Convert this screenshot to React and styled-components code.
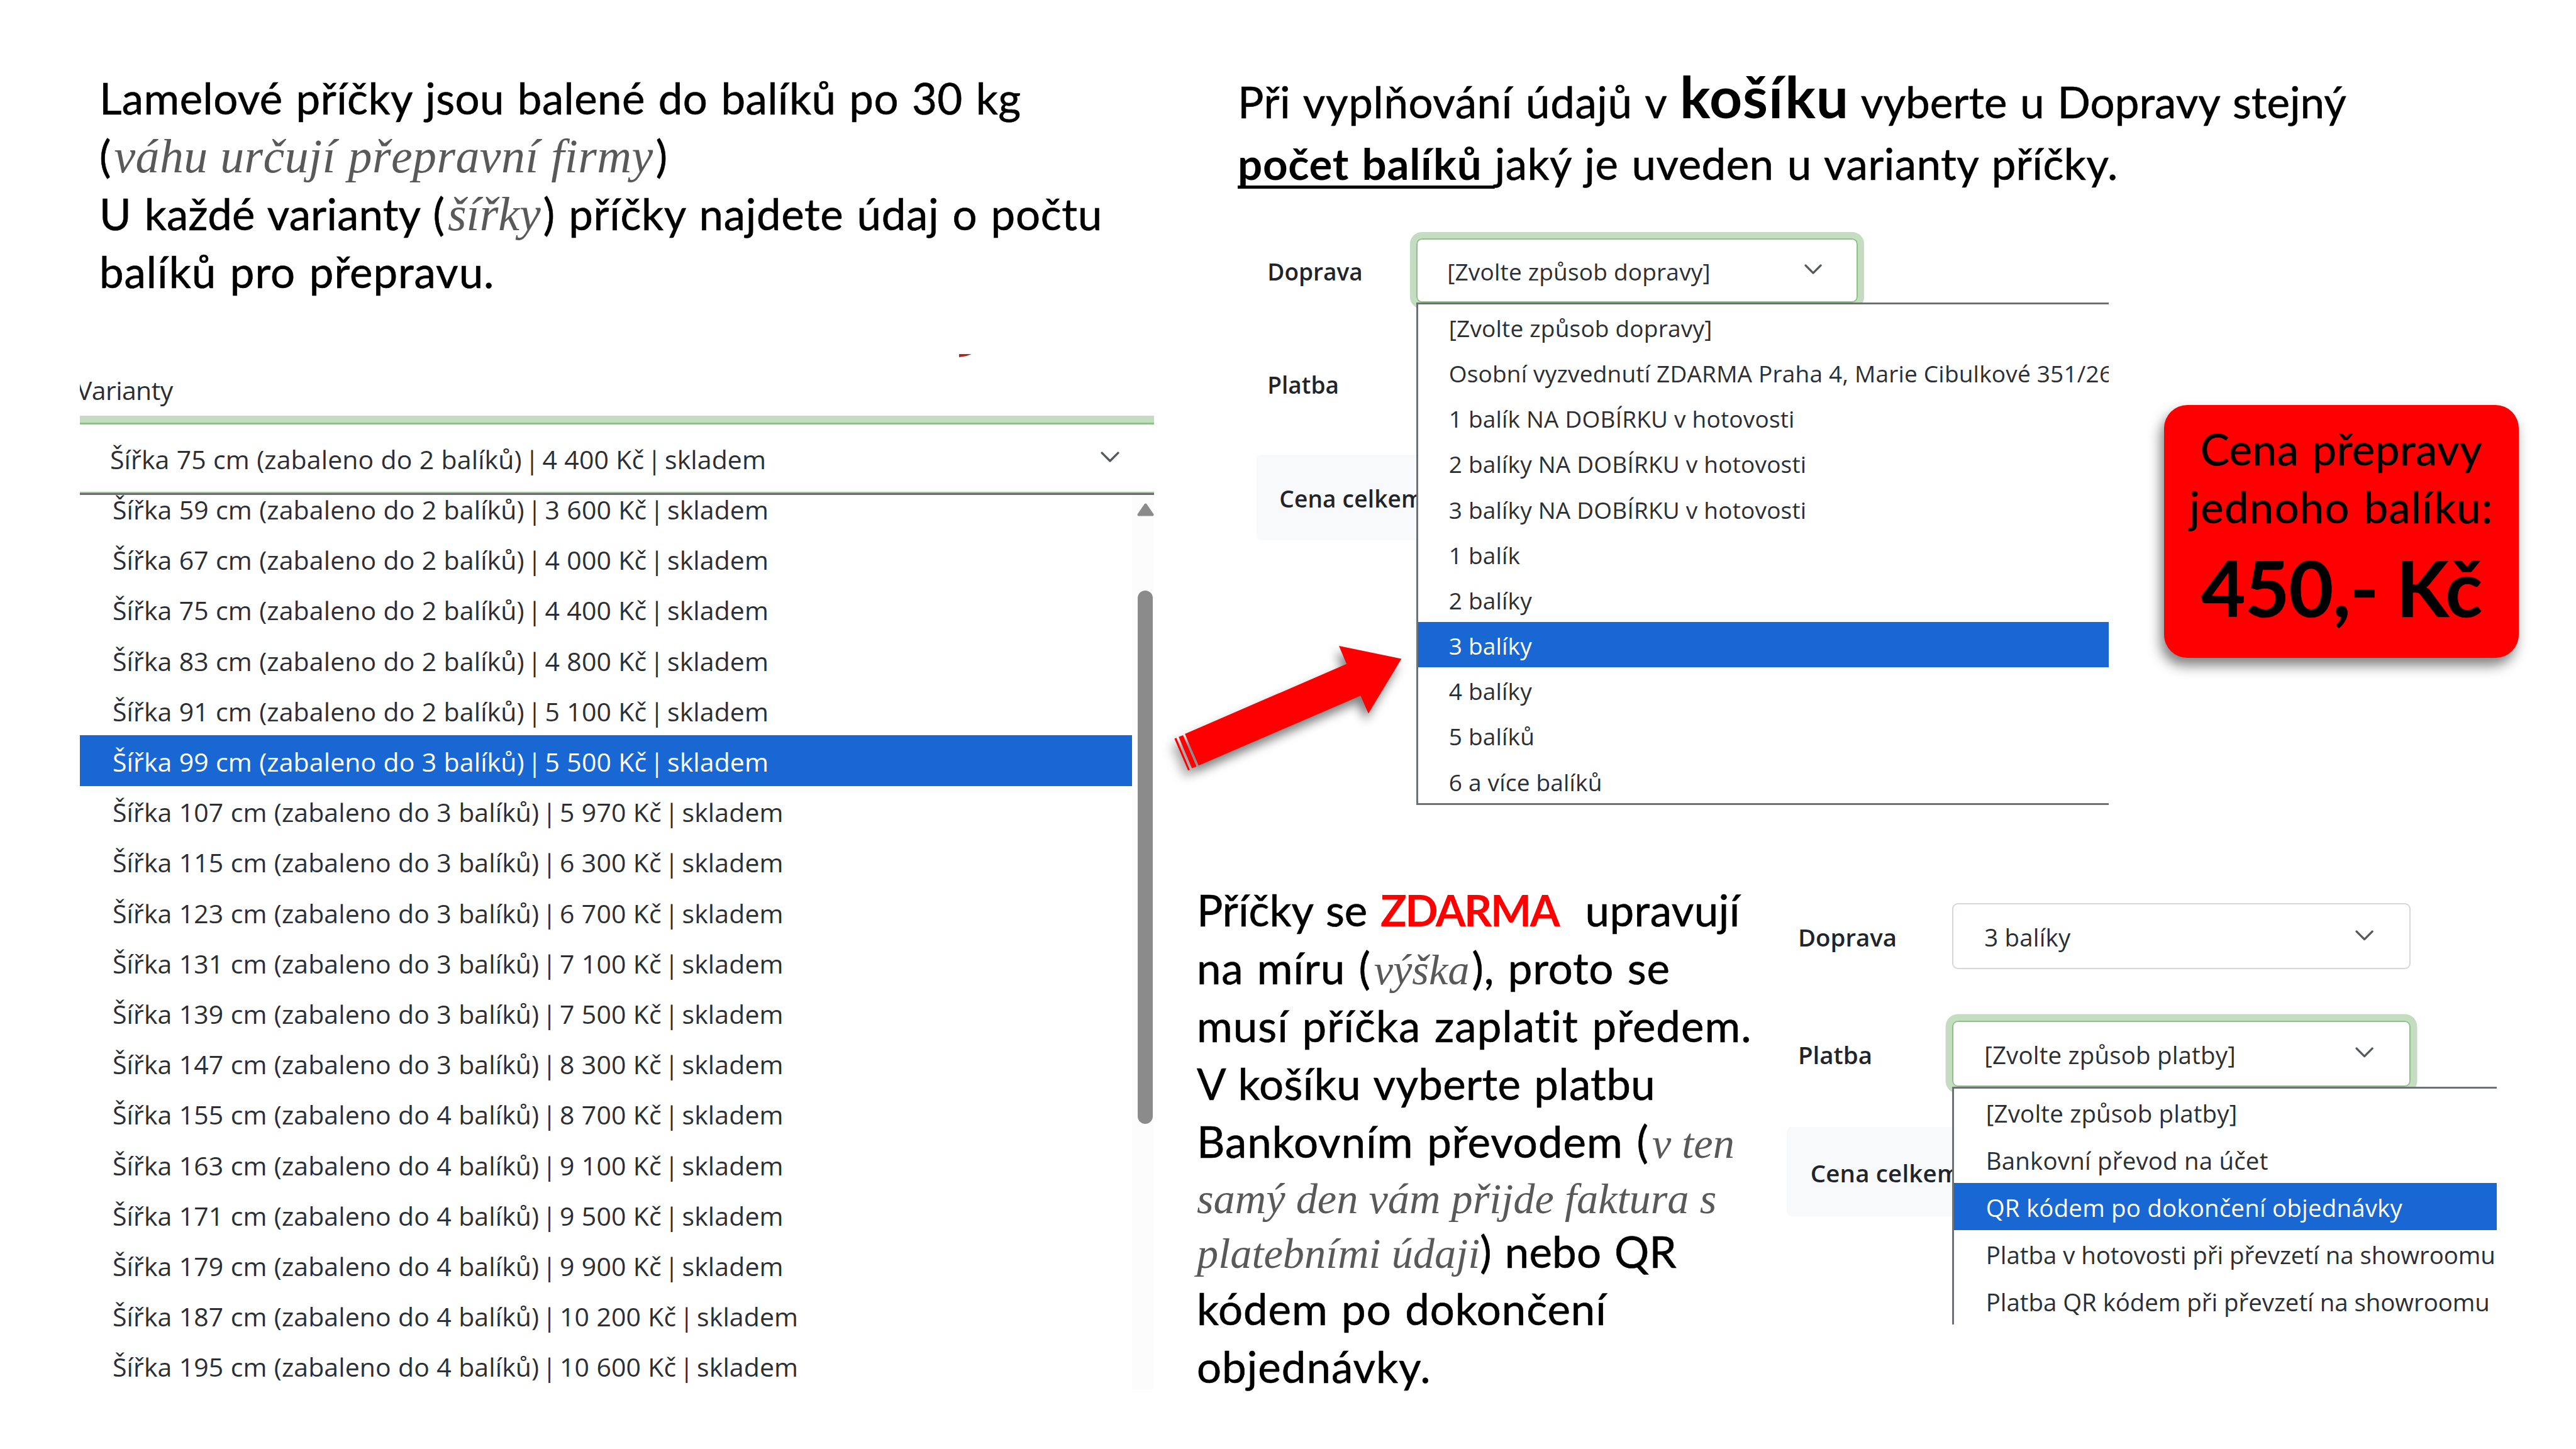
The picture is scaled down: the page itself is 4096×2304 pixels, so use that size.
import React from "react";
import styled, { createGlobalStyle, css } from "styled-components";

const GlobalStyle = createGlobalStyle`
  body {
    margin: 0;
    background: #ffffff;
  }

  *, *::before, *::after {
    box-sizing: border-box;
  }
`;

const textFont = css`
  font-family: Lato, "Open Sans", sans-serif;
  -webkit-text-stroke: 0.6px currentColor;
`;

const uiFont = css`
  font-family: "Open Sans", "Noto Sans", sans-serif;
`;

const Slide = styled.main`
  position: relative;
  display: flex;
  width: 4096px;
  height: 2304px;
  overflow: hidden;
  background: #ffffff;
`;

const LeftColumn = styled.section`
  flex: none;
  width: 1835px;
  padding: 110px 0 0 127px;
`;

const RightColumn = styled.section`
  flex: 1;
  display: flex;
  flex-direction: column;
  padding-top: 113px;
`;

const Paragraph = styled.div`
  ${textFont}
  flex: none;
  width: ${(p) => p.$width || "auto"};
  padding-left: ${(p) => p.$indent}px;
  color: #000000;
  font-size: 69px;
`;

const Line = styled.p`
  margin: 0;
  height: ${(p) => p.$height || 92}px;
  line-height: ${(p) => p.$height || 92}px;
  letter-spacing: ${(p) => p.$tracking || 0}px;
  word-spacing: 3px;
  white-space: pre;
`;

const Run = styled.span`
  letter-spacing: ${(p) => p.$tracking || 0}px;
`;

const Aside = styled.em`
  margin: ${(p) => (p.$spaced ? "0 4px 0 5px" : "0")};
  color: #595959;
  font-family: "Liberation Serif", serif;
  font-size: ${(p) => p.$size}px;
  line-height: 0;
  letter-spacing: ${(p) => p.$tracking || 0}px;
  word-spacing: 0;
  -webkit-text-stroke: 0;
`;

const Strong = styled.strong`
  color: ${(p) => p.$color || "inherit"};
  font-size: ${(p) => p.$size || 69}px;
  font-weight: 700;
  line-height: 0;
  letter-spacing: ${(p) => p.$tracking || 0}px;
  -webkit-text-stroke: 0;
`;

const Underlined = styled(Strong)`
  text-decoration: underline;
  text-decoration-thickness: 5px;
  text-decoration-skip-ink: none;
  text-underline-offset: 9px;
`;

/* Variant picker */

const VariantPanel = styled.div`
  ${uiFont}
  position: relative;
  width: 1708px;
  margin-top: 85px;
  overflow: hidden;
  color: #2b2f33;
  font-size: 41px;
  letter-spacing: 0.11px;
  word-spacing: 0.5px;
  white-space: pre;
`;

const RedMark = styled.svg`
  position: absolute;
  top: 0;
  left: 1398px;
  width: 22px;
  height: 5px;
`;

const VariantLabel = styled.div`
  height: 98px;
  margin-left: -5px;
  padding-top: 32px;
  line-height: 50px;
  letter-spacing: -0.6px;
`;

const VariantSelect = styled.div`
  display: flex;
  align-items: center;
  justify-content: space-between;
  height: 126px;
  padding: 3px 55px 0 48px;
  border-top: 11px solid #c4dcc0;
  border-bottom: 3px solid #6a6d6c;
  box-shadow: inset 0 3px #94bd90, inset 0 -2px #9cc698;
`;

const VariantBody = styled.div`
  display: flex;
  height: 1422px;
  overflow: hidden;
`;

const VariantList = styled.ul`
  flex: 1;
  margin: -18.5px 0 0;
  padding: 0;
  list-style: none;
`;

const VariantRow = styled.li`
  display: flex;
  align-items: center;
  height: 80.2px;
  padding: 3px 0 0 52px;
  background: ${(p) => (p.$active ? "#1967d2" : "transparent")};
  color: ${(p) => (p.$active ? "#ffffff" : "inherit")};
`;

const Pipe = styled.span`
  margin: 0 -6.2px;
`;

const Scrollbar = styled.div`
  display: flex;
  flex-direction: column;
  align-items: center;
  width: 35px;
  padding: 13px 0 0 7px;
  background: #fcfcfc;
`;

const ScrollThumb = styled.div`
  width: 24px;
  height: 848px;
  margin-top: 118px;
  border-radius: 12px;
  background: #8b8b8b;
`;

/* Basket form */

const Form = styled.div`
  ${uiFont}
  flex: none;
  width: ${(p) => p.$width}px;
  margin: ${(p) => p.$margin};
  color: #2b2f33;
  font-size: ${(p) => p.$size}px;
  letter-spacing: 0.2px;
  white-space: pre;
`;

const FormRow = styled.div`
  display: flex;
  align-items: center;
  height: 2.744em;
  margin-bottom: ${(p) => p.$gap}em;
`;

const FormLabel = styled.div`
  flex: none;
  width: ${(p) => p.$width || 6.86}em;
  padding: 0.07em 0 0 0.467em;
  color: #212529;
  font-weight: 600;
  letter-spacing: 0;
`;

const Field = styled.div`
  position: relative;
  width: 18.97em;
  height: 100%;
`;

const SelectBox = styled.div`
  display: flex;
  align-items: center;
  justify-content: space-between;
  height: 100%;
  padding: 0.07em 1.48em 0 1.28em;
  border: 2px solid ${(p) => (p.$focused ? "#8fbf8a" : "#d3d7dd")};
  border-radius: 0.24em;
  box-shadow: ${(p) => (p.$focused ? "0 0 0 0.272em #c4dcc0" : "none")};
`;

const Menu = styled.ul`
  position: absolute;
  top: 100%;
  left: 0;
  z-index: 1;
  width: ${(p) => p.$width}px;
  margin: 0;
  padding: 0;
  overflow: hidden;
  border: solid #6e7173;
  border-width: 3px 0 ${(p) => (p.$closed ? "3px" : "0")} 3px;
  background: #ffffff;
  list-style: none;
`;

const MenuItem = styled.li`
  display: flex;
  align-items: center;
  height: 1.951em;
  padding: 0.1em 0 0 1.323em;
  background: ${(p) => (p.$active ? "#1967d2" : "transparent")};
  color: ${(p) => (p.$active ? "#ffffff" : "inherit")};
  letter-spacing: ${(p) => (p.$tight ? "-0.04px" : "inherit")};
`;

const TotalBar = styled.div`
  display: flex;
  align-items: center;
  width: 9.7em;
  height: 3.688em;
  padding: 0.09em 0 0 0.98em;
  border-radius: 0.2em;
  background: #f8f9fb;
  color: #212529;
  font-weight: 600;
`;

/* Price card */

const MiddleRow = styled.div`
  display: flex;
  flex: none;
  height: 1092px;
`;

const BottomRow = styled.div`
  display: flex;
`;

const PriceCard = styled.div`
  ${textFont}
  flex: none;
  width: 564px;
  height: 402px;
  margin: 335px 0 0 88px;
  padding-top: 24px;
  border-radius: 37px;
  background: #ff0000;
  box-shadow: -5px 12px 20px rgba(0, 0, 0, 0.5);
  color: #000000;
  font-size: 69px;
  text-align: center;
`;

const Price = styled.div`
  font-size: 122px;
  font-weight: 700;
  line-height: 164px;
  letter-spacing: -1px;
`;

const ArrowSvg = styled.svg`
  position: absolute;
  top: 1000px;
  left: 1835px;
  width: 410px;
  height: 260px;
  overflow: visible;
  fill: #ff0000;
  filter: drop-shadow(-5px 11px 8px rgba(0, 0, 0, 0.5));
`;

const ChevronSvg = styled.svg`
  flex: none;
  width: ${(p) => p.$width || "0.76em"};
  height: auto;
  margin-top: -0.15em;
  fill: none;
  stroke: #55595c;
  stroke-width: 3.2;
  stroke-linecap: round;
  stroke-linejoin: round;
`;

const UpSvg = styled.svg`
  flex: none;
  width: 27px;
  height: 21px;
  fill: #8b8b8b;
  stroke: #8b8b8b;
  stroke-width: 4;
  stroke-linejoin: round;
`;

const Chevron = ({ width }) => (
  <ChevronSvg $width={width} viewBox="0 0 28 16">
    <path d="M2 2L14 14L26 2" />
  </ChevronSvg>
);

const Arrow = () => (
  <ArrowSvg viewBox="1835 1000 410 260">
    <path d="M2228.4 1047.6L2129 1027.1L2141.1 1055.7L1884.1 1167.1L1905.9 1217.3L2163.4 1106.2L2175.8 1134.5Z" />
    <path d="M1874.2 1171.7L1881.1 1168.9L1902.5 1218.8L1895.3 1221.6Z" />
    <path d="M1867.4 1174.5L1870.5 1173.2L1891.9 1224.1L1889.1 1225.1Z" />
  </ArrowSvg>
);

const variants = [
  [59, 2, "3 600"],
  [67, 2, "4 000"],
  [75, 2, "4 400"],
  [83, 2, "4 800"],
  [91, 2, "5 100"],
  [99, 3, "5 500"],
  [107, 3, "5 970"],
  [115, 3, "6 300"],
  [123, 3, "6 700"],
  [131, 3, "7 100"],
  [139, 3, "7 500"],
  [147, 3, "8 300"],
  [155, 4, "8 700"],
  [163, 4, "9 100"],
  [171, 4, "9 500"],
  [179, 4, "9 900"],
  [187, 4, "10 200"],
  [195, 4, "10 600"],
];

const shippingOptions = [
  "[Zvolte způsob dopravy]",
  "Osobní vyzvednutí ZDARMA Praha 4, Marie Cibulkové 351/26",
  "1 balík NA DOBÍRKU v hotovosti",
  "2 balíky NA DOBÍRKU v hotovosti",
  "3 balíky NA DOBÍRKU v hotovosti",
  "1 balík",
  "2 balíky",
  "3 balíky",
  "4 balíky",
  "5 balíků",
  "6 a více balíků",
];

const paymentOptions = [
  "[Zvolte způsob platby]",
  "Bankovní převod na účet",
  "QR kódem po dokončení objednávky",
  "Platba v hotovosti při převzetí na showroomu",
  "Platba QR kódem při převzetí na showroomu",
];

const VariantText = ({ variant: [width, count, price] }) => (
  <span>
    {`Šířka ${width} cm (zabaleno do ${count} balíků) `}
    <Pipe>|</Pipe>
    {` ${price} Kč `}
    <Pipe>|</Pipe>
    {" skladem"}
  </span>
);

const VariantPicker = () => (
  <VariantPanel>
    <RedMark viewBox="0 0 22 5">
      <path d="M0 0H20L12 3L0 5Z" fill="#b3261e" />
    </RedMark>
    <VariantLabel>Varianty</VariantLabel>
    <VariantSelect>
      <VariantText variant={variants[2]} />
      <Chevron width="30px" />
    </VariantSelect>
    <VariantBody>
      <VariantList>
        {variants.map((variant) => (
          <VariantRow key={variant[0]} $active={variant[0] === 99}>
            <VariantText variant={variant} />
          </VariantRow>
        ))}
      </VariantList>
      <Scrollbar>
        <UpSvg viewBox="0 0 27 21">
          <path d="M13.5 2.5L24.5 18.5H2.5Z" />
        </UpSvg>
        <ScrollThumb />
      </Scrollbar>
    </VariantBody>
  </VariantPanel>
);

const OptionMenu = ({ options, active, width, closed }) => (
  <Menu $width={width} $closed={closed}>
    {options.map((option) => (
      <MenuItem
        key={option}
        $active={option === active}
        $tight={option.endsWith("showroomu")}
      >
        {option}
      </MenuItem>
    ))}
  </Menu>
);

const ShippingForm = () => (
  <Form $size={37} $width={1355} $margin="70px 0 0 163px">
    <FormRow $gap={2.12}>
      <FormLabel>Doprava</FormLabel>
      <Field>
        <SelectBox $focused>
          {shippingOptions[0]}
          <Chevron />
        </SelectBox>
        <OptionMenu options={shippingOptions} active="3 balíky" width={1101} closed />
      </Field>
    </FormRow>
    <FormRow $gap={1.68}>
      <FormLabel>Platba</FormLabel>
    </FormRow>
    <TotalBar>Cena celkem</TotalBar>
  </Form>
);

const PaymentForm = () => (
  <Form $size={38.44} $width={1130} $margin="35px 0 0 0">
    <FormRow $gap={2.11}>
      <FormLabel $width={6.84}>Doprava</FormLabel>
      <Field>
        <SelectBox>
          3 balíky
          <Chevron />
        </SelectBox>
      </Field>
    </FormRow>
    <FormRow $gap={1.673}>
      <FormLabel $width={6.84}>Platba</FormLabel>
      <Field>
        <SelectBox $focused>
          {paymentOptions[0]}
          <Chevron />
        </SelectBox>
        <OptionMenu options={paymentOptions} active={paymentOptions[2]} width={866} />
      </Field>
    </FormRow>
    <TotalBar>Cena celkem</TotalBar>
  </Form>
);

export default function App() {
  return (
    <Slide>
      <GlobalStyle />
      <LeftColumn>
        <Paragraph $indent={31}>
          <Line $tracking={0.39}>Lamelové příčky jsou balené do balíků po 30 kg</Line>
          <Line>
            (<Aside $size={76} $tracking={0.4} $spaced>váhu určují přepravní firmy</Aside>)
          </Line>
          <Line>
            <Run $tracking={0.15}>U každé varianty (</Run>
            <Aside $size={76} $spaced>šířky</Aside>
            <Run $tracking={0.65}>) příčky najdete údaj o počtu</Run>
          </Line>
          <Line $tracking={0.95}>balíků pro přepravu.</Line>
        </Paragraph>
        <VariantPicker />
      </LeftColumn>
      <RightColumn>
        <Paragraph $indent={133}>
          <Line $height={98}>
            <Run $tracking={0.6}>Při vyplňování údajů v </Run>
            <Strong $size={91} $tracking={0.8}>košíku</Strong>
            <Run $tracking={0.05}> vyberte u Dopravy stejný</Run>
          </Line>
          <Line $height={98}>
            <Underlined $tracking={0.7}>počet balíků </Underlined>
            <Run $tracking={0.47}>jaký je uveden u varianty příčky.</Run>
          </Line>
        </Paragraph>
        <MiddleRow>
          <ShippingForm />
          <PriceCard>
            <Line $tracking={0.5}>Cena přepravy</Line>
            <Line $tracking={1.17}>jednoho balíku:</Line>
            <Price>450,- Kč</Price>
          </PriceCard>
        </MiddleRow>
        <BottomRow>
          <Paragraph $indent={68} $width="1006px">
            <Line>
              Příčky se <Strong $color="#ff0000" $tracking={-2.5}>ZDARMA</Strong>
              <Run $tracking={0.5}>  upravují</Run>
            </Line>
            <Line>
              <Run $tracking={0.8}>na míru (</Run>
              <Aside $size={68.4} $spaced>výška</Aside>
              <Run $tracking={0.8}>), proto se</Run>
            </Line>
            <Line $tracking={1.04}>musí příčka zaplatit předem.</Line>
            <Line $tracking={0.35}>V košíku vyberte platbu</Line>
            <Line>
              <Run $tracking={1}>Bankovním převodem (</Run>
              <Aside $size={68.4} $spaced>v ten</Aside>
            </Line>
            <Line $height={84}>
              <Aside $size={68.4}>samý den vám přijde faktura s</Aside>
            </Line>
            <Line $height={90}>
              <Aside $size={68.4}>platebními údaji</Aside>
              <Run $tracking={0.2}>) nebo QR</Run>
            </Line>
            <Line $tracking={0.9}>kódem po dokončení</Line>
            <Line $tracking={1}>objednávky.</Line>
          </Paragraph>
          <PaymentForm />
        </BottomRow>
      </RightColumn>
      <Arrow />
    </Slide>
  );
}
